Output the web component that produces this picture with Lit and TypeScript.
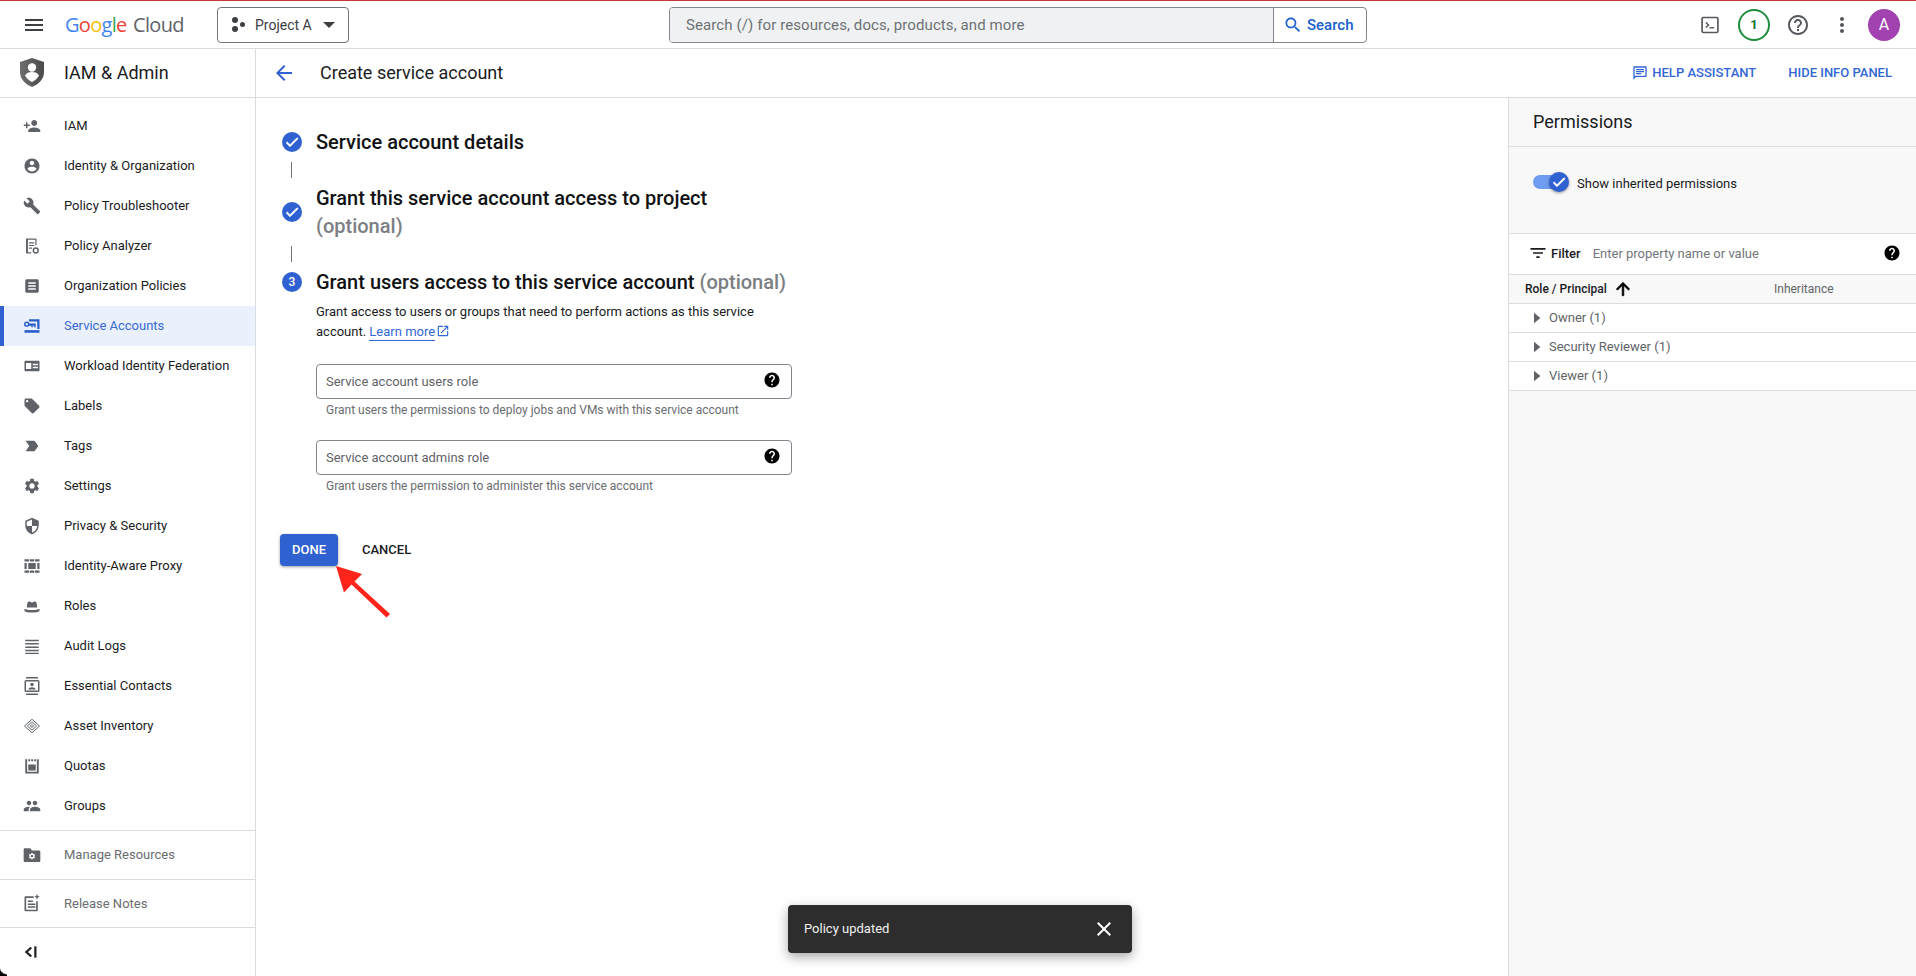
import { LitElement, html, css, svg } from "lit";
import { customElement } from "lit/decorators.js";

const P: Record<string, string> = {
  menu: "M3 18h18v-2H3v2zm0-5h18v-2H3v2zm0-7v2h18V6H3z",
  person_add: "M15 12c2.21 0 4-1.79 4-4s-1.79-4-4-4-4 1.79-4 4 1.79 4 4 4zm-9-2V7H4v3H1v2h3v3h2v-3h3v-2H6zm9 4c-2.67 0-8 1.34-8 4v2h16v-2c0-2.66-5.33-4-8-4z",
  account: "M12 2C6.48 2 2 6.48 2 12s4.48 10 10 10 10-4.48 10-10S17.52 2 12 2zm0 3c1.66 0 3 1.34 3 3s-1.34 3-3 3-3-1.34-3-3 1.34-3 3-3zm0 14.2c-2.5 0-4.71-1.28-6-3.22.03-1.99 4-3.08 6-3.08 1.99 0 5.97 1.09 6 3.08-1.29 1.94-3.5 3.22-6 3.22z",
  build: "M22.7 19l-9.1-9.1c.9-2.3.4-5-1.5-6.9-2-2-5-2.4-7.4-1.3L9 6 6 9 1.6 4.7C.4 7.1.9 10.1 2.9 12.1c1.9 1.9 4.6 2.4 6.9 1.5l9.1 9.1c.4.4 1 .4 1.4 0l2.3-2.3c.5-.4.5-1.1.1-1.4z",
  article: "M19 3H5c-1.1 0-2 .9-2 2v14c0 1.1.9 2 2 2h14c1.1 0 2-.9 2-2V5c0-1.1-.9-2-2-2zm-2 14H7v-2h10v2zm0-4H7v-2h10v2zm0-4H7V7h10v2z",
  offer: "M21.41 11.58l-9-9C12.05 2.22 11.55 2 11 2H4c-1.1 0-2 .9-2 2v7c0 .55.22 1.05.59 1.42l9 9c.36.36.86.58 1.41.58.55 0 1.05-.22 1.41-.59l7-7c.37-.36.59-.86.59-1.41 0-.55-.23-1.06-.59-1.42zM5.5 7C4.67 7 4 6.33 4 5.5S4.67 4 5.5 4 7 4.67 7 5.5 6.33 7 5.5 7z",
  tag: "M3.5 18.99l11 .01c.67 0 1.27-.33 1.63-.84L20.5 12l-4.37-6.16c-.36-.51-.96-.84-1.63-.84l-11 .01L8.34 12 3.5 18.99z",
  settings: "M19.14 12.94c.04-.3.06-.61.06-.94 0-.32-.02-.64-.07-.94l2.03-1.58c.18-.14.23-.41.12-.61l-1.92-3.32c-.12-.22-.37-.29-.59-.22l-2.39.96c-.5-.38-1.03-.7-1.62-.94l-.36-2.54c-.04-.24-.24-.41-.48-.41h-3.84c-.24 0-.43.17-.47.41l-.36 2.54c-.59.24-1.13.57-1.62.94l-2.39-.96c-.22-.08-.47 0-.59.22L2.74 8.87c-.12.21-.08.47.12.61l2.03 1.58c-.05.3-.09.63-.09.94s.02.64.07.94l-2.03 1.58c-.18.14-.23.41-.12.61l1.92 3.32c.12.22.37.29.59.22l2.39-.96c.5.38 1.03.7 1.62.94l.36 2.54c.05.24.24.41.48.41h3.84c.24 0 .44-.17.47-.41l.36-2.54c.59-.24 1.13-.56 1.62-.94l2.39.96c.22.08.47 0 .59-.22l1.92-3.32c.12-.22.07-.47-.12-.61l-2.01-1.58zM12 15.6c-1.98 0-3.6-1.62-3.6-3.6s1.62-3.6 3.6-3.6 3.6 1.62 3.6 3.6-1.62 3.6-3.6 3.6z",
  shield: "M12 1L3 5v6c0 5.55 3.84 10.74 9 12 5.16-1.26 9-6.45 9-12V5l-9-4zm0 10.99h7c-.53 4.12-3.28 7.79-7 8.94V12H5V6.3l7-3.11v8.8z",
  people: "M16 11c1.66 0 2.99-1.34 2.99-3S17.66 5 16 5c-1.66 0-3 1.34-3 3s1.34 3 3 3zm-8 0c1.66 0 2.99-1.34 2.99-3S9.66 5 8 5C6.34 5 5 6.34 5 8s1.34 3 3 3zm0 2c-2.33 0-7 1.17-7 3.5V19h6.6v-2.5c0-1.4.6-2.6 1.7-3.3-.5-.1-.9-.2-1.3-.2zm8 0c-2.33 0-6.6 1.17-6.6 3.5V19H23v-2.5c0-2.33-4.67-3.5-7-3.5z",
  help: "M12 2C6.48 2 2 6.48 2 12s4.48 10 10 10 10-4.48 10-10S17.52 2 12 2zm1 17h-2v-2h2v2zm2.07-7.75l-.9.92C13.45 12.9 13 13.5 13 15h-2v-.5c0-1.1.45-2.1 1.17-2.83l1.24-1.26c.37-.36.59-.86.59-1.41 0-1.1-.9-2-2-2s-2 .9-2 2H8c0-2.21 1.79-4 4-4s4 1.79 4 4c0 .88-.36 1.68-.93 2.25z",
  help_o: "M11 18h2v-2h-2v2zm1-16C6.48 2 2 6.48 2 12s4.48 10 10 10 10-4.48 10-10S17.52 2 12 2zm0 18c-4.41 0-8-3.59-8-8s3.59-8 8-8 8 3.59 8 8-3.59 8-8 8zm0-14c-2.21 0-4 1.79-4 4h2c0-1.1.9-2 2-2s2 .9 2 2c0 2-3 1.75-3 5h2c0-2.25 3-2.5 3-5 0-2.21-1.79-4-4-4z",
  search: "M15.5 14h-.79l-.28-.27C15.41 12.59 16 11.11 16 9.5 16 5.91 13.09 3 9.5 3S3 5.91 3 9.5 5.91 16 9.5 16c1.61 0 3.09-.59 4.23-1.57l.27.28v.79l5 4.99L20.49 19l-4.99-5zm-6 0C7.01 14 5 11.99 5 9.5S7.01 5 9.5 5 14 7.01 14 9.5 11.99 14 9.5 14z",
  back: "M20 11H7.83l5.59-5.59L12 4l-8 8 8 8 1.41-1.41L7.83 13H20v-2z",
  close: "M19 6.41L17.59 5 12 10.59 6.41 5 5 6.41 10.59 12 5 17.59 6.41 19 12 13.41 17.59 19 19 17.59 13.41 12 19 6.41z",
  filter: "M10 18h4v-2h-4v2zM3 6v2h18V6H3zm3 7h12v-2H6v2z",
  up: "M4 12l1.41 1.41L11 7.83V20h2V7.83l5.58 5.59L20 12l-8-8-8 8z",
  open: "M19 19H5V5h7V3H5c-1.11 0-2 .9-2 2v14c0 1.1.89 2 2 2h14c1.1 0 2-.9 2-2v-7h-2v7zM14 3v2h3.59l-9.83 9.83 1.41 1.41L19 6.41V10h2V3h-7z",
  chat: "M20 2H4c-1.1 0-2 .9-2 2v18l4-4h14c1.1 0 2-.9 2-2V4c0-1.1-.9-2-2-2zm0 14H5.17L4 17.17V4h16v12zM6 12h8v2H6zM6 9h12v2H6zM6 6h12v2H6z",
  check: "M9 16.17L4.83 12l-1.42 1.41L9 19 21 7l-1.41-1.41z",
  caret: "M8 5l8.500 7L8 19z",
  dots: "M12 8c1.1 0 2-.9 2-2s-.9-2-2-2-2 .9-2 2 .9 2 2 2zm0 2c-1.1 0-2 .9-2 2s.9 2 2 2 2-.9 2-2-.9-2-2-2zm0 6c-1.1 0-2 .9-2 2s.9 2 2 2 2-.9 2-2-.9-2-2-2z",
};

const CUSTOM: Record<string, unknown> = {
  analyzer: svg`<path d="M5 2h12a1 1 0 011 1v8h-1.6V3.6H6.6v16.8H11V22H5a1 1 0 01-1-1V3a1 1 0 011-1z"/><path d="M8 7h7v1.5H8zM8 10.5h7V12H8zM8 14h4v1.5H8z"/><circle cx="17" cy="18" r="3.2" fill="none" stroke="currentColor" stroke-width="2"/>`,
  service: svg`<path d="M2 17.5h20V21H2z"/><path d="M8 3h14v13h-3V6H8z"/><circle cx="5" cy="9.5" r="2.6" fill="none" stroke="currentColor" stroke-width="2"/><path d="M8 8.5h9v5h-2v-2h-2v2h-2v-2H8z"/>`,
  workload: svg`<path fill-rule="evenodd" d="M3 5h18a1 1 0 011 1v12a1 1 0 01-1 1H3a1 1 0 01-1-1V6a1 1 0 011-1zm1 3v8h7V8H4zm9 1v2h7V9h-7zm0 4v2h7v-2h-7z"/>`,
  iap: svg`<path d="M2 3h6v3H2zM9 3h6v3H9zM16 3h6v3h-6zM2 18h6v3H2zM9 18h6v3H9zM16 18h6v3h-6zM2 8h3v8H2zM19 8h3v8h-3zM7 8h10v8H7z"/>`,
  roles: svg`<path d="M7.5 6c1.5 0 3 1 4.5 1s3-1 4.500-1c1.500 0 2 3 2.500 8H5c.5-5 1-8 2.500-8z"/><path d="M2 15.500c3 2.500 17 2.500 20 0v3c-3 3-17 3-20 0z"/>`,
  audit: svg`<path d="M3 3.500h18v2H3zM3 8h18v2H3zM3 12.500h18v2H3zM3 17h18v2H3zM3 21h18v1.500H3z"/>`,
  contacts: svg`<path d="M4 0h16v2H4zM4 22h16v2H4z"/><rect x="3" y="5" width="18" height="14" rx="1" fill="none" stroke="currentColor" stroke-width="2"/><circle cx="12" cy="10" r="2.300"/><path d="M7 16.500c0-2 3-3 5-3s5 1 5 3z"/>`,
  asset: svg`<g fill="none" stroke="currentColor" stroke-width="1.300"><path d="M12 3l10 9-10 9-10-9z"/><path d="M12 6.500l6 5.500-6 5.500-6-5.500z"/><path d="M12 10l2.300 2-2.300 2-2.300-2z"/></g>`,
  quotas: svg`<path d="M3 3h2.500v16.500h13V3H21v19H3z"/><path d="M7 3h2.500v2.500H7zM11 3h2.500v2.500H11zM15 3h2.500v2.500H15z"/><path d="M7 10h10v8H7z"/>`,
  folder: svg`<path d="M10 4H3.500C2.500 4 2 4.800 2 5.800V19c0 1 .7 1.500 1.500 1.500h17c1 0 1.500-.7 1.500-1.500V8c0-1-.7-1.500-1.500-1.500H12L10 4z"/><g transform="translate(7.200 8.600) scale(.4)"><path fill="#fff" d="${P.settings}"/></g>`,
  notes: svg`<path d="M14 4H4.500C3.700 4 3 4.700 3 5.500v15c0 .8.7 1.500 1.500 1.500h13c.8 0 1.500-.7 1.500-1.500V10h-2v10H5V6h9z"/><path d="M7 9h6v1.800H7zM7 12.500h9v1.800H7zM7 16h9v1.800H7z"/><path d="M18 1l1 2.500 2.500 1-2.500 1-1 2.500-1-2.500-2.500-1 2.500-1z"/>`,
  collapse: svg`<path d="M11 6l-6.500 6 6.500 6" fill="none" stroke="currentColor" stroke-width="3"/><path d="M15 4.500h3v15h-3z"/>`,
  terminal: svg`<rect x="2.500" y="3" width="19" height="18" rx="1.500" fill="none" stroke="currentColor" stroke-width="2"/><path d="M7 9l3.200 3L7 15" fill="none" stroke="currentColor" stroke-width="1.800"/><path d="M11.500 14.500H17v1.700h-5.500z"/>`,
};

const icon = (name: string, cls: string) => html`<svg class="ic ${cls}" viewBox="0 0 24 24" aria-hidden="true">${CUSTOM[name] ?? svg`<path d="${P[name]}"></path>`}</svg>`;

const NAV: [string, string][] = [
  ["person_add", "IAM"],
  ["account", "Identity & Organization"],
  ["build", "Policy Troubleshooter"],
  ["analyzer", "Policy Analyzer"],
  ["article", "Organization Policies"],
  ["service", "Service Accounts"],
  ["workload", "Workload Identity Federation"],
  ["offer", "Labels"],
  ["tag", "Tags"],
  ["settings", "Settings"],
  ["shield", "Privacy & Security"],
  ["iap", "Identity-Aware Proxy"],
  ["roles", "Roles"],
  ["audit", "Audit Logs"],
  ["contacts", "Essential Contacts"],
  ["asset", "Asset Inventory"],
  ["quotas", "Quotas"],
  ["people", "Groups"],
];

@customElement("app-root")
export class AppRoot extends LitElement {
  static styles = css`
    :host { display: block; height: 976px; width: 1916px; overflow: hidden; position: relative; font-family: Roboto, "Liberation Sans", sans-serif; font-size: 13px; color: #1a1b1e; background: #fff; }
    * { box-sizing: border-box; }
    .ic { display: block; flex: none; fill: currentColor; }
    .s14 { width: 14px; height: 14px; } .s16 { width: 16px; height: 16px; } .s18 { width: 18px; height: 18px; }
    .s20 { width: 20px; height: 20px; } .s24 { width: 24px; height: 24px; }
    .chk { stroke: currentColor; stroke-width: 1.200px; }
    .bold { stroke: currentColor; stroke-width: .8px; }
    .top { height: 49px; border-top: 1px solid #c5393a; border-bottom: 1px solid #dadce0; display: flex; align-items: center; padding-left: 22px; padding-right: 16px; }
    .top .menu { color: #3c4043; }
    .logo { margin-left: 19px; width: 152px; font-family: "Open Sans", sans-serif; font-size: 20px; letter-spacing: -0.7px; white-space: nowrap; }
    .logo b { font-weight: 400; }
    .g1 { color: #4285f4; } .g2 { color: #ea4335; } .g3 { color: #fbbc05; } .g4 { color: #34a853; } .cloud { color: #5f6368; margin-left: 2px; }
    .project { width: 132px; height: 36px; border: 1px solid #70757a; border-radius: 4px; display: flex; align-items: center; padding-left: 11px; color: #3c4043; font-size: 14px; }
    .project .dots3 { width: 18px; height: 18px; margin-right: 8px; }
    .project .car { width: 0; height: 0; border-left: 6px solid transparent; border-right: 6px solid transparent; border-top: 6px solid #3c4043; margin-left: 11px; }
    .search { margin-left: 320px; width: 698px; height: 36px; border: 1px solid #80868b; border-radius: 4px; display: flex; overflow: hidden; }
    .search .field { flex: 1; background: #f0f1f3; border-right: 1px solid #80868b; display: flex; align-items: center; padding-left: 16px; color: #6d7175; font-size: 15px; letter-spacing: .1px; }
    .search .btn { width: 92px; display: flex; align-items: center; gap: 4px; padding-left: 9px; color: #1a5fcc; font-size: 15px; font-weight: 500; }
    .actions { margin-left: auto; display: flex; align-items: center; gap: 12px; }
    .act { width: 32px; height: 32px; display: flex; align-items: center; justify-content: center; color: #55585c; }
    .badge { width: 32px; height: 32px; border-radius: 50%; border: 2px solid #1e8e3e; color: #137333; font-weight: 700; font-size: 13px; display: flex; align-items: center; justify-content: center; }
    .avatar { width: 32px; height: 32px; border-radius: 50%; background: #a142b0; color: #fff; font-size: 16px; display: flex; align-items: center; justify-content: center; margin-left: -2px; }
    .body { display: flex; height: 927px; }
    .side { width: 256px; border-right: 1px solid #dadce0; display: flex; flex-direction: column; flex: none; }
    .side-head { height: 49px; border-bottom: 1px solid #dadce0; display: flex; align-items: center; padding-left: 20px; gap: 20px; font-size: 18px; }
    .shield { width: 24px; height: 29px; display: block; }
    nav { padding-top: 8px; padding-bottom: 4px; }
    .row { height: 40px; display: flex; align-items: center; padding-left: 23px; gap: 23px; }
    .row .ic { color: #5f6368; }
    .row.on { background: #ebf1fc; box-shadow: inset 4px 0 0 #3061d0; color: #3868d4; }
    .row.on .ic { color: #2a5fc9; }
    .foot { height: 49px; border-top: 1px solid #dadce0; display: flex; align-items: center; padding-left: 22px; gap: 22px; color: #696c70; }
    .foot .ic { color: #5f6368; }
    .foot.col { color: #202124; padding-left: 23px; }
    .foot.col .ic { color: #202124; }
    .right { flex: 1; display: flex; flex-direction: column; min-width: 0; }
    .sub { height: 49px; border-bottom: 1px solid #dadce0; display: flex; align-items: center; padding: 0 24px 1px 16px; }
    .sub .back { color: #3061d0; margin-right: 24px; }
    .sub h1 { font-size: 18px; font-weight: 400; margin: 0; }
    .linkbtn { color: #3367d6; font-weight: 500; font-size: 13px; display: flex; align-items: center; gap: 4px; }
    .linkbtn.first { margin-left: auto; margin-right: 32px; }
    .cols { flex: 1; display: flex; min-height: 0; }
    main { flex: 1; padding: 30px 0 0 24px; }
    .step { display: flex; align-items: center; }
    .circle { width: 20px; height: 20px; border-radius: 50%; background: #3061d0; color: #fff; margin: 0 14px 0 2px; display: flex; align-items: center; justify-content: center; font-size: 12px; font-weight: 500; flex: none; }
    .title { font-size: 20px; line-height: 28px; font-weight: 500; color: #111214; width: 490px; }
    .opt { color: #7b7e82; }
    .opt.blk { display: block; }
    .conn { width: 1px; height: 16px; background: #70757a; margin: 6px 0 6px 11px; }
    .body-step { margin-left: 36px; width: 476px; }
    .desc { margin-top: 6px; line-height: 20px; }
    .desc a { color: #3367d6; border-bottom: 1px solid #3367d6; padding-bottom: 1px; }
    .desc .ic { display: inline-block; vertical-align: -2px; color: #3367d6; margin-left: 1px; }
    .field2 { height: 35px; margin-top: 22px; border: 1px solid #80868b; border-radius: 4px; display: flex; align-items: center; justify-content: space-between; padding: 0 10px 1px 9px; color: #5f6368; }
    .field2 .ic { color: #000; margin-top: -3px; }
    .hint { font-size: 12px; line-height: 16px; margin: 3px 0 0 10px; color: #696c70; }
    .btns { display: flex; align-items: center; margin-top: 40px; gap: 24px; font-weight: 500; font-size: 13px; }
    .btns > div { padding-bottom: 2px; }
    .done { width: 58px; height: 32px; border-radius: 4px; background: #3061d0; color: #fff; display: flex; align-items: center; justify-content: center; box-shadow: 0 1px 3px rgba(60,64,67,.5); }
    .panel { width: 408px; flex: none; border-left: 1px solid #dadce0; background: #f8f8f8; }
    .p-title { height: 49px; border-bottom: 1px solid #dadce0; display: flex; align-items: center; padding: 0 0 2px 24px; font-size: 18px; }
    .p-toggle { height: 87px; border-bottom: 1px solid #dadce0; padding: 25px 0 0 24px; display: flex; align-items: flex-start; }
    .track { width: 27px; height: 14px; margin-top: 3px; border-radius: 7px; background: #6f9cf0; display: flex; align-items: center; justify-content: flex-end; flex: none; }
    .thumb { width: 20px; height: 20px; border-radius: 50%; background: #3061d0; color: #fff; margin-right: -9px; display: flex; align-items: center; justify-content: center; box-shadow: 0 1px 3px rgba(0,0,0,.4); flex: none; }
    .t-label { margin-left: 17px; line-height: 21px; padding-top: 1px; }
    .p-filter { height: 41px; background: #fff; border-bottom: 1px solid #dadce0; display: flex; align-items: center; padding: 0 15px 2px 19px; }
    .p-filter .fl { font-weight: 500; margin-left: 3px; }
    .p-filter .ph { color: #72757a; margin-left: 12px; flex: 1; }
    .p-filter .q { color: #000; }
    .p-head { height: 29px; border-bottom: 1px solid #dadce0; display: grid; grid-template-columns: 249px 1fr; align-items: center; padding-left: 16px; font-size: 12px; }
    .p-head .rp { font-weight: 500; display: flex; align-items: center; gap: 6px; }
    .p-head .rp .ic { color: #000; }
    .p-head .inh { color: #5f6368; }
    .p-row { height: 29px; background: #fff; border-bottom: 1px solid #dadce0; display: flex; align-items: center; padding: 0 0 1px 19px; color: #5f6368; }
    .p-row .ic { color: #5f6368; margin-right: 3px; }
    .toast { position: absolute; left: 788px; top: 905px; width: 344px; height: 48px; border-radius: 4px; background: #2d2d2d; color: #f1f1f1; display: flex; align-items: center; justify-content: space-between; padding: 0 16px; box-shadow: 0 4px 12px rgba(0,0,0,.35); }
    .toast span { padding-bottom: 1px; }
    .toast .ic { color: #fff; }
    .arrow { position: absolute; left: 330px; top: 560px; width: 66px; height: 64px; }
    .corner { position: absolute; left: 0; bottom: 0; width: 7px; height: 9px; background: radial-gradient(circle at 100% 0, transparent 6.500px, #000 8px); }
  `;

  render() {
    return html`
      <header class="top">
        <span class="menu">${icon("menu", "s24")}</span>
        <div class="logo"><b class="g1">G</b><b class="g2">o</b><b class="g3">o</b><b class="g1">g</b><b class="g4">l</b><b class="g2">e</b> <span class="cloud">Cloud</span></div>
        <div class="project">
          <svg class="ic dots3" viewBox="0 0 18 18"><circle cx="6" cy="4" r="3" fill="#3c4043"></circle><circle cx="13.500" cy="8.500" r="2.500" fill="#3c4043"></circle><circle cx="6" cy="13" r="3" fill="#3c4043"></circle></svg>
          <span>Project A</span><span class="car"></span>
        </div>
        <div class="search">
          <div class="field">Search (/) for resources, docs, products, and more</div>
          <div class="btn">${icon("search", "s20")}<span>Search</span></div>
        </div>
        <div class="actions">
          <div class="act">${icon("terminal", "s20")}</div>
          <div class="badge">1</div>
          <div class="act">${icon("help_o", "s24")}</div>
          <div class="act">${icon("dots", "s24")}</div>
          <div class="avatar">A</div>
        </div>
      </header>
      <div class="body">
        <aside class="side">
          <div class="side-head">
            <svg class="shield" viewBox="0 0 24 29">
              <defs><linearGradient id="sg" x1="0" x2="1" y1="0" y2="0"><stop offset="0" stop-color="#6e6e6e"></stop><stop offset="1" stop-color="#4a4a4a"></stop></linearGradient></defs>
              <path fill="url(#sg)" d="M12 0l12 4v10c0 7-5 12-12 15C5 26 0 21 0 14V4z"></path>
              <circle cx="12" cy="9.500" r="4.200" fill="#fff"></circle>
              <path fill="#fff" d="M5 17.500c1-2.500 4-3.500 7-3.500s6 1 7 3.500c-1.500 3-4 5-7 6.500-3-1.500-5.500-3.500-7-6.500z"></path>
            </svg>
            <span>IAM &amp; Admin</span>
          </div>
          <nav>
            ${NAV.map(([i, t]) => html`<div class="row ${t === "Service Accounts" ? "on" : ""}">${icon(i, "s18")}<span>${t}</span></div>`)}
          </nav>
          <div class="foot">${icon("folder", "s20")}<span>Manage Resources</span></div>
          <div class="foot">${icon("notes", "s20")}<span>Release Notes</span></div>
          <div class="foot col">${icon("collapse", "s18")}</div>
        </aside>
        <div class="right">
          <div class="sub">
            <span class="back">${icon("back", "s24")}</span>
            <h1>Create service account</h1>
            <div class="linkbtn first">${icon("chat", "s16")}<span>HELP ASSISTANT</span></div>
            <div class="linkbtn"><span>HIDE INFO PANEL</span></div>
          </div>
          <div class="cols">
            <main>
              <div class="step"><span class="circle">${icon("check", "s16 chk")}</span><div class="title">Service account details</div></div>
              <div class="conn"></div>
              <div class="step"><span class="circle">${icon("check", "s16 chk")}</span><div class="title">Grant this service account access to project <span class="opt blk">(optional)</span></div></div>
              <div class="conn"></div>
              <div class="step"><span class="circle">3</span><div class="title">Grant users access to this service account <span class="opt">(optional)</span></div></div>
              <div class="body-step">
                <div class="desc">Grant access to users or groups that need to perform actions as this service account. <a>Learn more</a>${icon("open", "s14")}</div>
                <div class="field2"><span>Service account users role</span>${icon("help", "s18")}</div>
                <div class="hint">Grant users the permissions to deploy jobs and VMs with this service account</div>
                <div class="field2"><span>Service account admins role</span>${icon("help", "s18")}</div>
                <div class="hint">Grant users the permission to administer this service account</div>
              </div>
              <div class="btns"><div class="done">DONE</div><div>CANCEL</div></div>
            </main>
            <section class="panel">
              <div class="p-title">Permissions</div>
              <div class="p-toggle"><div class="track"><div class="thumb">${icon("check", "s16 chk")}</div></div><div class="t-label">Show inherited permissions</div></div>
              <div class="p-filter">${icon("filter", "s20")}<span class="fl">Filter</span><span class="ph">Enter property name or value</span><span class="q">${icon("help", "s18")}</span></div>
              <div class="p-head"><div class="rp"><span>Role / Principal</span>${icon("up", "s20 bold")}</div><div class="inh">Inheritance</div></div>
              ${["Owner (1)", "Security Reviewer (1)", "Viewer (1)"].map((r) => html`<div class="p-row">${icon("caret", "s18")}<span>${r}</span></div>`)}
            </section>
          </div>
        </div>
      </div>
      <svg class="arrow" viewBox="330 560 66 64" aria-hidden="true"><path fill="#ff2419" d="M336 566l26 8-7.500 7.500L390 614l-3.500 3.500-35-33-7.500 8z"></path></svg>
      <div class="toast"><span>Policy updated</span>${icon("close", "s24")}</div>
      <div class="corner"></div>
    `;
  }
}
